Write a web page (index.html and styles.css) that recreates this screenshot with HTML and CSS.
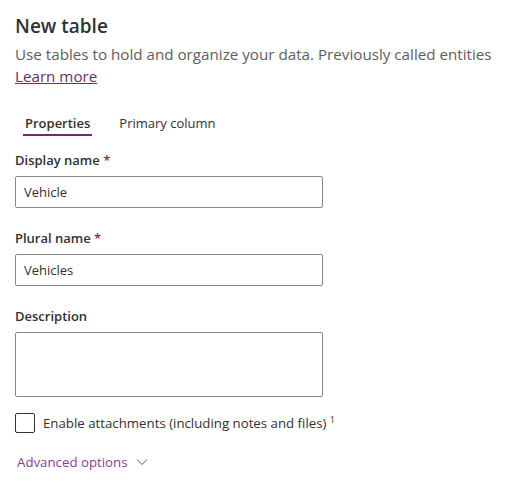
FILE: index.html
```html
<!DOCTYPE html>
<html lang="en">
<head>
<meta charset="utf-8">
<title>New table</title>
<link rel="stylesheet" href="styles.css">
</head>
<body>
<div class="panel">
  <h1 class="title">New table</h1>
  <p class="subtitle">Use tables to hold and organize your data. Previously called entities <a class="link" href="#">Learn more</a></p>

  <div class="tabs">
    <button class="tab tab-active">Properties</button>
    <button class="tab">Primary column</button>
  </div>

  <div class="field">
    <label class="label">Display name <span class="req">*</span></label>
    <div class="input">Vehicle</div>
  </div>

  <div class="field">
    <label class="label">Plural name <span class="req">*</span></label>
    <div class="input">Vehicles</div>
  </div>

  <div class="field">
    <label class="label">Description</label>
    <div class="textarea"></div>
  </div>

  <div class="check-row">
    <span class="checkbox"></span>
    <span class="check-text">Enable attachments (including notes and files) <sup class="sup">1</sup></span>
  </div>

  <button class="advanced">Advanced options
    <svg class="chev" width="12" height="12" viewBox="0 0 12 12"><path d="M1 3.5 L6 8.5 L11 3.5" fill="none" stroke="#605e5c" stroke-width="1"/></svg>
  </button>
</div>
</body>
</html>
```

FILE: styles.css
```css
* { box-sizing: border-box; }
body {
  margin: 0;
  background: #ffffff;
  font-family: "Open Sans", "Segoe UI", sans-serif;
  color: #323130;
}
.panel {
  padding: 12px 15px 0 15px;
}
.title {
  margin: 0;
  font-size: 19px;
  line-height: 28px;
  font-weight: 600;
  color: #323130;
}
.subtitle {
  margin: 3px 0 0 0;
  font-size: 15.2px;
  line-height: 22px;
  color: #605e5c;
}
.link {
  color: #742774;
  text-decoration: underline;
}
.tabs {
  display: flex;
  margin-top: 18px;
  height: 36px;
}
.tab {
  position: relative;
  border: 0;
  background: none;
  padding: 0 10px;
  font-family: inherit;
  font-size: 13px;
  line-height: 36px;
  color: #323130;
  cursor: pointer;
}
.tab + .tab { margin-left: 9px; padding-left: 10px; }
.tab-active { font-weight: 600; }
.tab-active::after {
  content: "";
  position: absolute;
  left: 8px;
  right: 8px;
  bottom: 5px;
  height: 2px;
  background: #742774;
}
.field {
  display: flex;
  flex-direction: column;
  margin-top: 4px;
}
.field + .field { margin-top: 15px; }
.label {
  font-size: 13px;
  line-height: 20px;
  padding: 5px 0 6px;
  font-weight: 600;
  color: #323130;
}
.req { color: #a4262c; }
.input {
  width: 308px;
  height: 32px;
  border: 1px solid #8a8886;
  border-radius: 2px;
  padding: 0 8px;
  font-size: 13px;
  line-height: 30px;
  color: #323130;
}
.textarea {
  width: 308px;
  height: 65px;
  border: 1px solid #8a8886;
  border-radius: 2px;
}
.check-row {
  display: flex;
  align-items: center;
  margin-top: 16px;
  gap: 8px;
}
.checkbox {
  width: 20px;
  height: 20px;
  border: 1px solid #323130;
  border-radius: 2px;
  flex: none;
}
.check-text {
  font-size: 13.25px;
  line-height: 20px;
  color: #323130;
}
.sup {
  font-size: 9px;
  vertical-align: 5px;
  line-height: 0;
}
.advanced {
  display: flex;
  align-items: center;
  gap: 9px;
  margin-top: 12px;
  margin-left: 2px;
  padding: 0;
  height: 34px;
  border: 0;
  background: none;
  font-family: inherit;
  font-size: 13.25px;
  color: #8e3a94;
  cursor: pointer;
}
.chev { display: block; }
```
